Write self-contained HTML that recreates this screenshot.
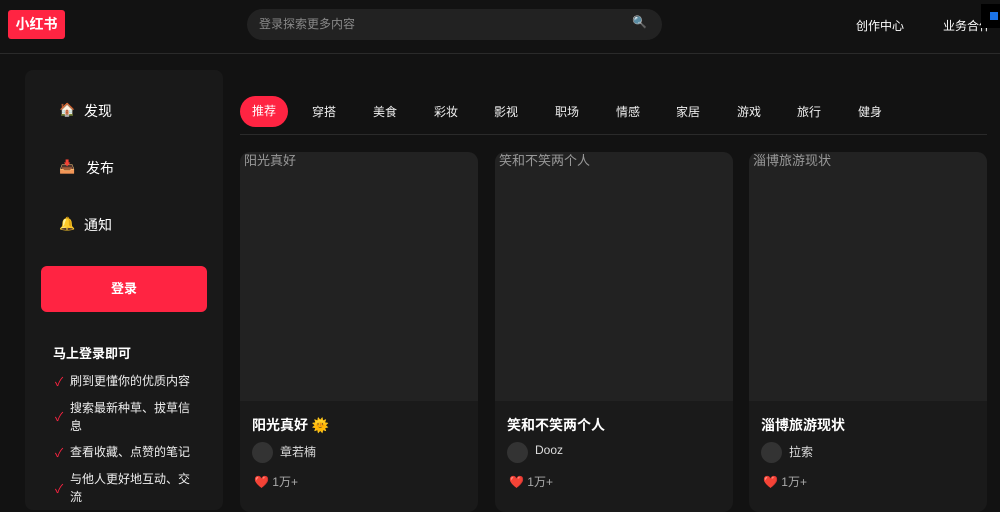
<!DOCTYPE html><html><head><meta charset="utf-8"><style>
*{margin:0;padding:0;box-sizing:border-box}
body{width:1000px;height:496px;overflow:hidden;background:#121212;font-family:"Liberation Sans","Noto Sans CJK SC",sans-serif;color:#fff;position:relative}
.a{position:absolute;white-space:nowrap}
.card{position:absolute;top:152px;width:238px;height:360px;border-radius:10px;background:#1a1a1a;overflow:hidden}
.card .img{height:249px;background:#222;color:#999;font-size:13px;padding:0 0 0 4px;line-height:18px}
.card .t{position:absolute;left:12px;top:263px;font-size:14px;font-weight:bold}
.card .av{position:absolute;left:12px;top:290px;width:21px;height:21px;border-radius:50%;background:#333}
.card .n{position:absolute;left:40px;top:291px;font-size:12px;color:#ddd}
.card .l{position:absolute;left:14px;top:321px;font-size:12px;color:#aaa}
.tab{position:absolute;top:103px;font-size:12px;color:#eee}
.ck{position:absolute;left:55px;color:#ff2442;font-size:12px}
.ct{position:absolute;left:70px;font-size:12px;color:#eee;line-height:18px;width:130px}
</style></head><body>
<div class="a" style="left:0;top:53px;width:1000px;height:1px;background:#2a2a2a"></div>
<div class="a" style="left:8px;top:10px;width:57px;height:29px;background:#ff2442;border-radius:3px;font-weight:bold;font-size:14px;line-height:29px;text-align:center">小红书</div>
<div class="a" style="left:247px;top:9px;width:415px;height:31px;background:#222;border-radius:16px;font-size:12px;color:#888;line-height:31px;padding-left:12px">登录探索更多内容</div>
<div class="a" style="left:632px;top:15px;font-size:12px">🔍</div>
<div class="a" style="left:856px;top:17px;font-size:12px">创作中心</div>
<div class="a" style="left:943px;top:17px;font-size:12px;width:44px;overflow:hidden">业务合作</div>
<div class="a" style="left:981px;top:4px;width:19px;height:24px;background:#000"></div>
<div class="a" style="left:990px;top:12px;width:8px;height:8px;background:#1a73e8"></div>
<div class="a" style="left:25px;top:70px;width:198px;height:440px;background:#191919;border-radius:8px"></div>
<div class="a" style="left:59px;top:102px;font-size:13px">🏠</div><div class="a" style="left:84px;top:101px;font-size:14px">发现</div>
<div class="a" style="left:59px;top:159px;font-size:13px">📥</div><div class="a" style="left:86px;top:158px;font-size:14px">发布</div>
<div class="a" style="left:59px;top:216px;font-size:13px">🔔</div><div class="a" style="left:84px;top:215px;font-size:14px">通知</div>
<div class="a" style="left:41px;top:266px;width:166px;height:46px;background:#ff2442;border-radius:6px;font-weight:bold;font-size:13px;line-height:46px;text-align:center">登录</div>
<div class="a" style="left:53px;top:343px;font-size:13px;font-weight:bold">马上登录即可</div>
<div class="ck" style="top:373px">✓</div><div class="ct" style="top:372px">刷到更懂你的优质内容</div>
<div class="ck" style="top:408px">✓</div><div class="ct" style="top:399px;white-space:normal">搜索最新种草、拔草信息</div>
<div class="ck" style="top:444px">✓</div><div class="ct" style="top:443px">查看收藏、点赞的笔记</div>
<div class="ck" style="top:480px">✓</div><div class="ct" style="top:470px;white-space:normal">与他人更好地互动、交流</div>
<div class="a" style="left:240px;top:96px;width:48px;height:31px;background:#ff2442;border-radius:16px;font-size:12px;line-height:31px;text-align:center">推荐</div>
<div class="tab" style="left:312px">穿搭</div><div class="tab" style="left:373px">美食</div><div class="tab" style="left:434px">彩妆</div><div class="tab" style="left:494px">影视</div><div class="tab" style="left:555px">职场</div><div class="tab" style="left:616px">情感</div><div class="tab" style="left:676px">家居</div><div class="tab" style="left:737px">游戏</div><div class="tab" style="left:797px">旅行</div><div class="tab" style="left:858px">健身</div>
<div class="a" style="left:240px;top:134px;width:747px;height:1px;background:#2a2a2a"></div>
<div class="card" style="left:240px"><div class="img">阳光真好</div><div class="t">阳光真好 🌞</div><div class="av"></div><div class="n">章若楠</div><div class="l">❤️ 1万+</div></div>
<div class="card" style="left:495px"><div class="img">笑和不笑两个人</div><div class="t">笑和不笑两个人</div><div class="av"></div><div class="n">Dooz</div><div class="l">❤️ 1万+</div></div>
<div class="card" style="left:749px"><div class="img">淄博旅游现状</div><div class="t">淄博旅游现状</div><div class="av"></div><div class="n">拉索</div><div class="l">❤️ 1万+</div></div>
</body></html>
